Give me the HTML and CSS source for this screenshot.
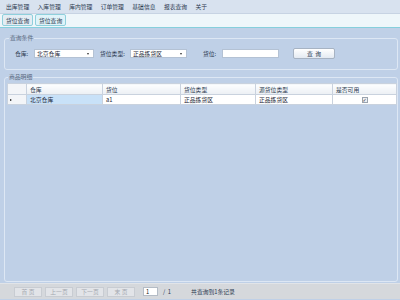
FILE: index.html
```html
<!DOCTYPE html>
<html lang="zh">
<head>
<meta charset="utf-8">
<link rel="stylesheet" href="styles.css">
</head>
<body>
<div class="app">
  <nav class="menubar">
    <span class="menu-item">出库管理</span>
    <span class="menu-item">入库管理</span>
    <span class="menu-item">库内管理</span>
    <span class="menu-item">订单管理</span>
    <span class="menu-item">基础信息</span>
    <span class="menu-item">报表查询</span>
    <span class="menu-item">关于</span>
  </nav>
  <div class="tabbar">
    <span class="tab">货位查询</span>
    <span class="tab tab-active">货位查询</span>
  </div>
  <main class="content">
    <fieldset class="group group-query">
      <legend class="legend legend-query">查询条件</legend>
      <div class="query-row">
        <label class="lbl lbl-wh">仓库:</label>
        <div class="select sel-wh"><span class="select-text">北京仓库</span><span class="arrow"></span></div>
        <label class="lbl lbl-type">货位类型:</label>
        <div class="select sel-type"><span class="select-text">正品拣货区</span><span class="arrow"></span></div>
        <label class="lbl lbl-loc">货位:</label>
        <div class="input input-loc"></div>
        <button class="btn-query">查&nbsp;&nbsp;询</button>
      </div>
    </fieldset>
    <fieldset class="group group-grid">
      <legend class="legend legend-grid">商品明细</legend>
      <table class="grid">
        <colgroup>
          <col class="c-rh"><col class="c-wh"><col class="c-loc"><col class="c-type"><col class="c-src"><col>
        </colgroup>
        <thead>
          <tr>
            <th class="rh"></th>
            <th>仓库</th>
            <th>货位</th>
            <th>货位类型</th>
            <th>源货位类型</th>
            <th>是否可用</th>
          </tr>
        </thead>
        <tbody>
          <tr>
            <td class="rh"><span class="row-arrow"></span></td>
            <td class="sel">北京仓库</td>
            <td>a1</td>
            <td>正品拣货区</td>
            <td>正品拣货区</td>
            <td class="chk-cell"><span class="chk">✓</span></td>
          </tr>
        </tbody>
      </table>
    </fieldset>
  </main>
  <footer class="pager">
    <button class="pbtn">首&nbsp;页</button>
    <button class="pbtn">上一页</button>
    <button class="pbtn">下一页</button>
    <button class="pbtn">末&nbsp;页</button>
    <div class="page-input">1</div>
    <span class="page-total">/&nbsp;&nbsp;1</span>
    <span class="page-info">共查询到1条记录</span>
  </footer>
</div>
</body>
</html>
```
FILE: styles.css
```css
* { box-sizing: border-box; }
html, body { margin: 0; padding: 0; }
body {
  width: 400px;
  height: 300px;
  overflow: hidden;
  background: #bfd0e7;
  font-family: "Noto Sans CJK SC", "Noto Sans", sans-serif;
  font-size: 5.8px;
  color: #2a3548;
}
.app {
  display: flex;
  flex-direction: column;
  height: 300px;
}
.menubar {
  height: 14px;
  display: flex;
  align-items: center;
  padding-left: 1.8px;
  background: #d8e2ef;
  border-bottom: 1px solid #c7d3e3;
}
.menu-item {
  padding: 0 4.2px;
  line-height: 8px;
  color: #2c3a50;
}
.tabbar {
  height: 14px;
  display: flex;
  align-items: flex-start;
  gap: 2px;
  padding: 0 0 0 2px;
  background: #eef6fa;
  border-bottom: 1px solid #86cfdc;
}
.tab {
  height: 12px;
  width: 31px;
  display: flex;
  align-items: center;
  padding-left: 3px;
  border: 1px solid #8fd0dc;
  border-radius: 2px;
  background: #e3edf4;
  color: #2c3a50;
}
.tab-active {
  background: #dff3f9;
}
.content {
  flex: 1;
  display: flex;
  flex-direction: column;
  padding: 6px 2px 0 4px;
}
.group {
  margin: 0;
  border: 1px solid #dde7f4;
  border-radius: 3px;
  min-width: 0;
}
.legend {
  padding: 0 1px;
  line-height: 8px;
  color: #5a6980;
}
.legend-query { margin-left: 4px; }
.legend-grid { margin-left: 1px; }
.group-query {
  padding: 6px 0 10px 0;
}
.query-row {
  display: flex;
  align-items: center;
  height: 11px;
  padding-left: 10px;
}
.lbl {
  line-height: 8px;
  color: #2c3a50;
}
.lbl-wh { width: 19px; }
.lbl-type { width: 30px; margin-left: 6px; }
.lbl-loc { width: 19px; margin-left: 16px; }
.select, .input {
  height: 9px;
  background: #fff;
  border: 1px solid #b4c2d4;
  display: flex;
  align-items: center;
  position: relative;
}
.select-text {
  padding-left: 2px;
  line-height: 7px;
  color: #1e2838;
}
.arrow {
  position: absolute;
  right: 4px;
  top: 3px;
  width: 0;
  height: 0;
  border-left: 1.5px solid transparent;
  border-right: 1.5px solid transparent;
  border-top: 2px solid #333;
}
.sel-wh { width: 60px; }
.sel-type { width: 57px; }
.input-loc { width: 57px; }
.btn-query {
  margin-left: 14px;
  width: 42px;
  height: 11px;
  padding: 0;
  font: inherit;
  line-height: 8px;
  color: #2c3a50;
  border: 1px solid #a7b3c3;
  border-radius: 2px;
  background: linear-gradient(#ffffff, #e4eaf2);
}
.group-grid {
  flex: 1;
  margin-top: 3px;
  margin-bottom: 1px;
  padding: 2px 0 0 2px;
}
.grid {
  width: 100%;
  table-layout: fixed;
  border-collapse: collapse;
}
.c-rh { width: 19px; }
.c-wh { width: 76px; }
.c-loc { width: 78px; }
.c-type { width: 75px; }
.c-src { width: 77px; }
.grid th, .grid td {
  border: 1px solid #c9d2de;
  padding: 0 0 0 3px;
  text-align: left;
  font-weight: normal;
  white-space: nowrap;
  overflow: hidden;
}
.grid th {
  height: 11px;
  background: linear-gradient(#fdfeff, #ebeff4);
  color: #2c3a50;
}
.grid td {
  height: 10px;
  background: #fff;
  color: #1e2838;
}
.grid .rh {
  padding: 0 0 0 2px;
  background: #f3f5f8;
}
.grid td.sel {
  background: #c8e1f8;
}
.row-arrow {
  display: inline-block;
  width: 0;
  height: 0;
  border-top: 1.5px solid transparent;
  border-bottom: 1.5px solid transparent;
  border-left: 2px solid #111;
  vertical-align: middle;
}
.chk-cell {
  text-align: center !important;
  padding: 0 !important;
}
.chk {
  display: inline-block;
  width: 6px;
  height: 6px;
  line-height: 5px;
  font-size: 5px;
  text-align: center;
  border: 1px solid #9aa3ae;
  background: #eef0f3;
  color: #333;
  vertical-align: middle;
  font-family: "DejaVu Sans", sans-serif;
}
.pager {
  height: 16px;
  margin-bottom: 1px;
  display: flex;
  align-items: center;
  padding-left: 14px;
  background: #d5d8dc;
  border-top: 1px solid #e1e4e8;
}
.pbtn {
  width: 28px;
  height: 10px;
  margin-right: 3px;
  padding: 0;
  font: inherit;
  line-height: 8px;
  color: #a4a9b0;
  border: 1px solid #c8ccd2;
  background: #e2e4e8;
}
.page-input {
  margin-left: 5px;
  width: 15px;
  height: 9px;
  background: #fff;
  border: 1px solid #b4bcc6;
  line-height: 7px;
  padding-left: 2px;
  color: #222;
}
.page-total {
  margin-left: 5px;
  color: #2c3a50;
}
.page-info {
  margin-left: 20px;
  color: #2c3a50;
}
```
